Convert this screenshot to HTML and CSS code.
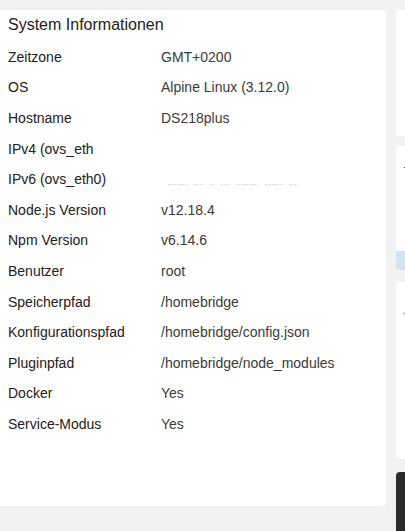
FILE: index.html
```html
<!DOCTYPE html>
<html lang="de">
<head>
  <meta charset="UTF-8">
  <title>Homebridge Status</title>
  <link rel="stylesheet" href="styles.css">
</head>
<body>

<div class="dashboard">

  <!-- System info widget -->
  <div class="widget sysinfo">
    <h5 class="widget-title">System Informationen</h5>
    <div class="info-table">
      <div class="info-row"><span class="info-key">Zeitzone</span><span class="info-val">GMT+0200</span></div>
      <div class="info-row"><span class="info-key">OS</span><span class="info-val">Alpine Linux (3.12.0)</span></div>
      <div class="info-row"><span class="info-key">Hostname</span><span class="info-val">DS218plus</span></div>
      <div class="info-row"><span class="info-key">IPv4 (ovs_eth</span><span class="info-val"></span></div>
      <div class="info-row">
        <span class="info-key">IPv6 (ovs_eth0)</span>
        <span class="info-val masked">
          <i class="dots w20"></i><i class="dots w8"></i><i class="dots w4"></i><i class="dots w8"></i><i class="dots w22"></i><i class="dots w18"></i><i class="dots w8"></i>
        </span>
      </div>
      <div class="info-row"><span class="info-key">Node.js Version</span><span class="info-val">v12.18.4</span></div>
      <div class="info-row"><span class="info-key">Npm Version</span><span class="info-val">v6.14.6</span></div>
      <div class="info-row"><span class="info-key">Benutzer</span><span class="info-val">root</span></div>
      <div class="info-row"><span class="info-key">Speicherpfad</span><span class="info-val">/homebridge</span></div>
      <div class="info-row"><span class="info-key">Konfigurationspfad</span><span class="info-val">/homebridge/config.json</span></div>
      <div class="info-row"><span class="info-key">Pluginpfad</span><span class="info-val">/homebridge/node_modules</span></div>
      <div class="info-row"><span class="info-key">Docker</span><span class="info-val">Yes</span></div>
      <div class="info-row"><span class="info-key">Service-Modus</span><span class="info-val">Yes</span></div>
    </div>
  </div>

  <!-- Neighbouring widgets column -->
  <div class="side-col">
    <div class="widget side-one"></div>
    <div class="widget side-two">
      <div class="side-body"><i class="mark"></i></div>
      <div class="side-footer"></div>
    </div>
    <div class="widget side-three"><i class="mark faint"></i></div>
    <div class="terminal"></div>
  </div>

</div>

</body>
</html>
```

FILE: styles.css
```css
body {
  margin: 0;
  background-color: #f2f2f2;
  font-family: "Liberation Sans", Arial, sans-serif;
  overflow: hidden;
  height: 531px;
}
.dashboard {
  display: flex;
  gap: 10px;
  padding-top: 10px;
  width: 700px;
}
.widget {
  background-color: #ffffff;
  border-radius: 4px;
}
.sysinfo {
  flex: 0 0 386px;
  padding: 5px 8px;
  border-radius: 0 4px 4px 0;
  box-sizing: border-box;
  height: 496px;
}
.widget-title {
  margin: 0 0 7px;
  font-size: 16px;
  font-weight: normal;
  line-height: 20px;
  color: #1c1c1c;
}
.info-row {
  display: grid;
  grid-template-columns: 153px 1fr;
  font-size: 14px;
  line-height: 21px;
  padding: 4.8px 0;
}
.info-key {
  color: #212121;
}
.info-val {
  color: #3a3a3a;
}
.masked {
  display: flex;
  align-items: flex-end;
  gap: 7px;
  padding-left: 7px;
  height: 16px;
}
.dots {
  display: block;
  border-bottom: 1px dotted #d6d6d6;
}
.w4 { width: 4px; }
.w8 { width: 8px; }
.w18 { width: 18px; }
.w20 { width: 20px; }
.w22 { width: 22px; }

.side-col {
  flex: 0 0 300px;
  display: flex;
  flex-direction: column;
}
.side-one {
  height: 126px;
}
.side-two {
  margin-top: 10px;
  height: 124px;
  display: flex;
  flex-direction: column;
  overflow: hidden;
}
.side-body {
  flex: 1;
  padding: 21px 8px 0;
}
.side-footer {
  height: 19px;
  background-color: #d3e3f3;
}
/* first glyph of each widget header peeking in */
.mark {
  display: block;
  width: 4px;
  height: 1px;
  background-color: #444;
}
.mark.faint {
  width: 3px;
  height: 3px;
  border-radius: 50%;
  background-color: #c4c4c4;
}
.side-three {
  margin-top: 12px;
  height: 177px;
  padding: 30px 7px;
  box-sizing: border-box;
}
.terminal {
  margin-top: 13px;
  height: 80px;
  background-color: #2b2b2b;
  border-radius: 4px 0 0 0;
}
```
